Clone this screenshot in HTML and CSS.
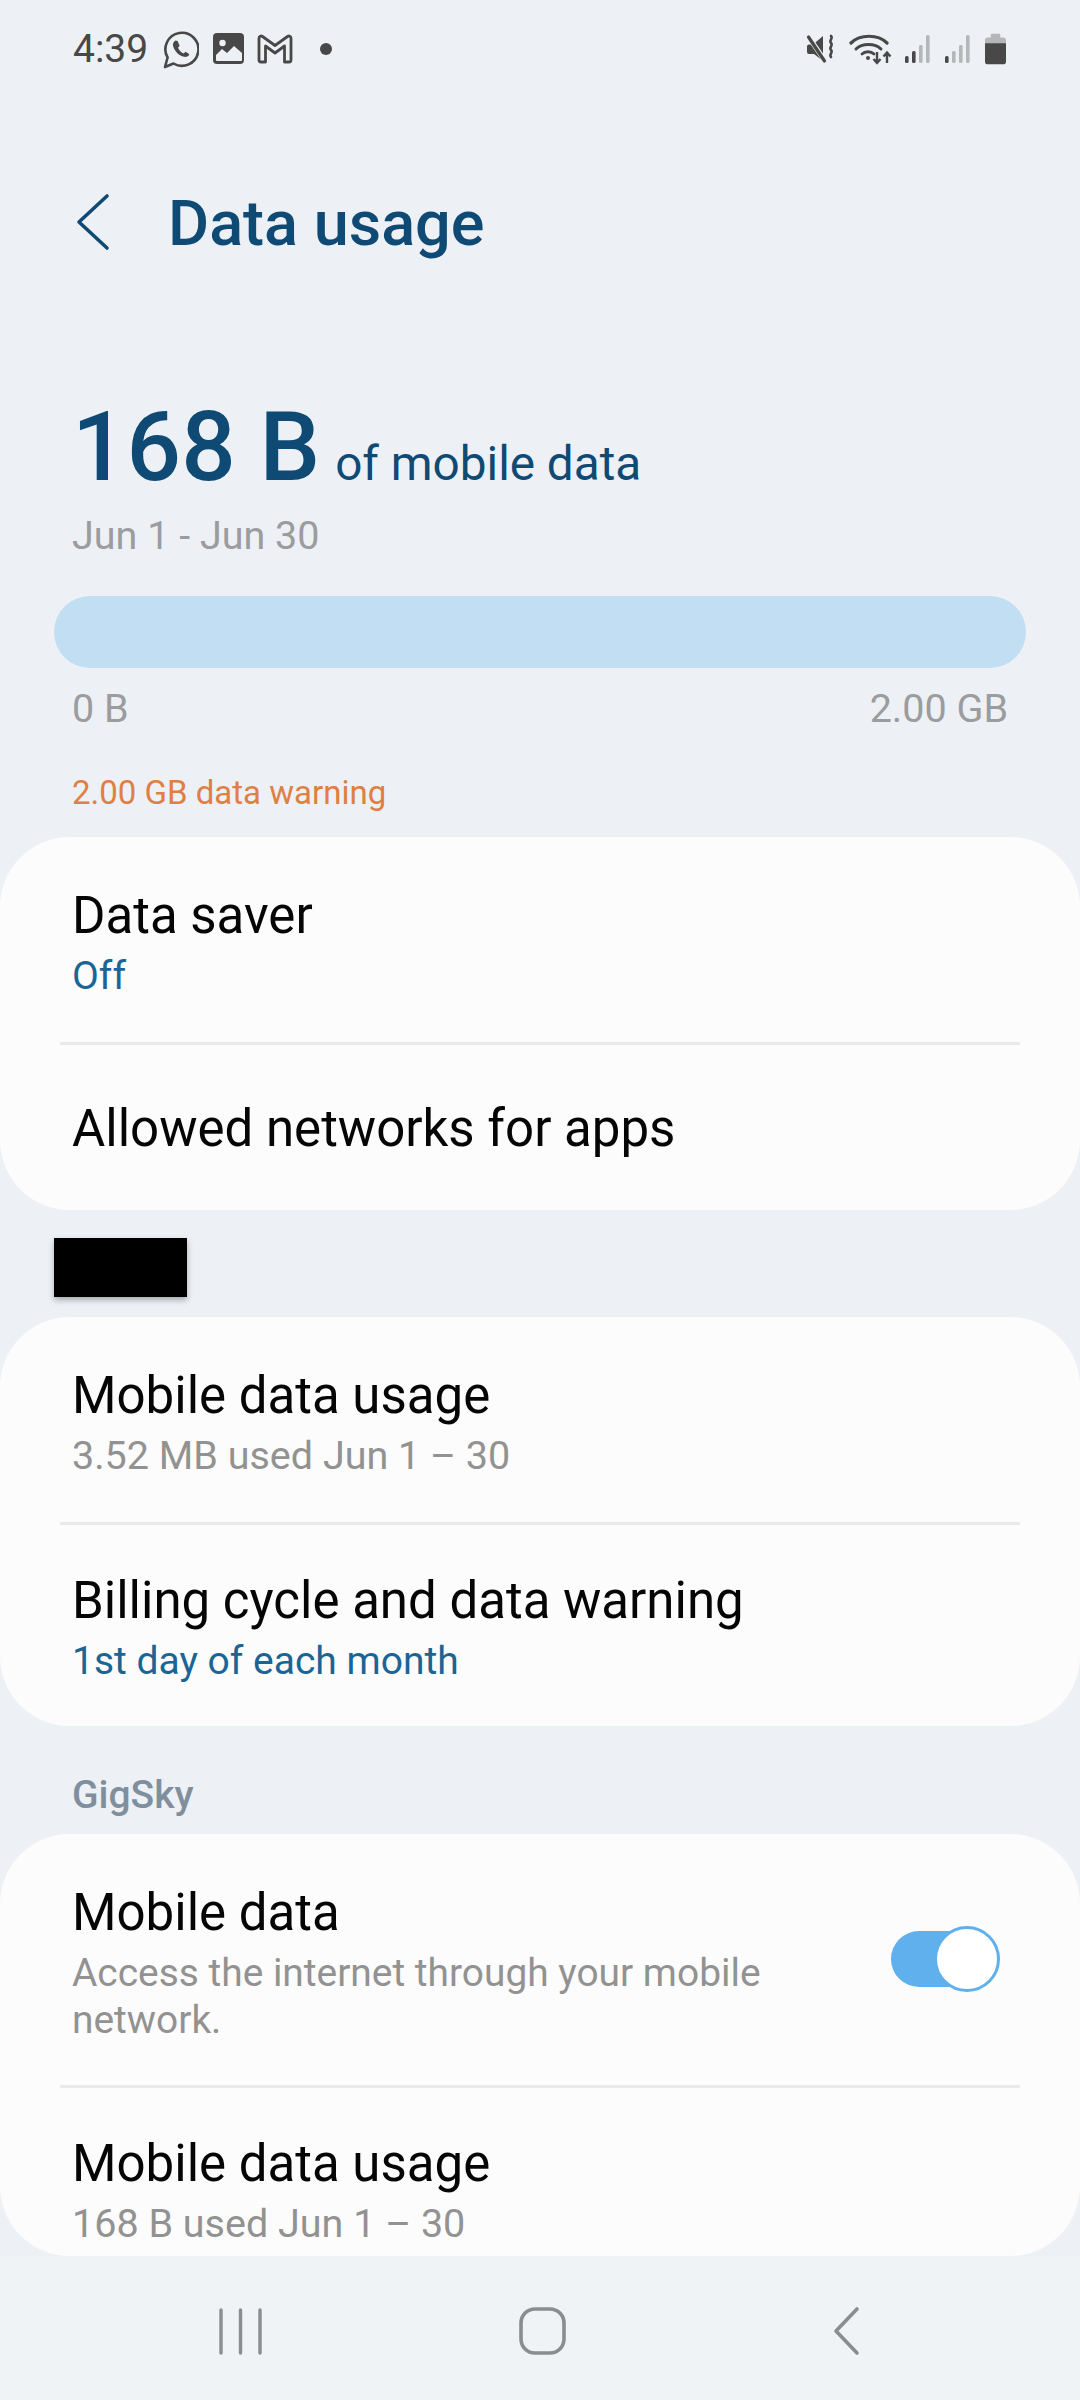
FILE: index.html
```html
<!DOCTYPE html>
<html lang="en">
<head>
<meta charset="utf-8">
<title>Data usage</title>
<link rel="stylesheet" href="styles.css">
</head>
<body>
<div class="screen">
  <div class="status">
    <div class="status-left">
      <span class="time">4:39</span>
      <svg class="ic-wa" viewBox="0 0 36 38" width="36" height="38"><path d="M2 36l2.600-9.500A16.500 16.500 0 1 1 10.500 32.500z" fill="none" stroke="#484848" stroke-width="2.600" stroke-linejoin="round"/><path d="M12.500 9.500c-1.800 1-3 3-2.400 5.500 1.300 5 5.500 9.500 11 10.800 2.400.5 4.500-.6 5.300-2.600l-3.800-2.500-2 1.700c-2.500-1-4.500-3-5.600-5.600l1.600-2.100-2-4.800z" fill="#484848"/></svg>
      <svg class="ic-img" viewBox="0 0 32 32" width="32" height="32"><rect width="31" height="31" rx="4" fill="#484848"/><circle cx="9.500" cy="10" r="3.200" fill="#edf1f5"/><path d="M3 27v-5l6-6 5 4 7-7 8 7v7a1 1 0 0 1-1 1H4a1 1 0 0 1-1-1z" fill="#edf1f5"/></svg>
      <svg class="ic-gm" viewBox="0 0 36 30" width="36" height="30"><path d="M2 4.500c0-2.500 2-3 3.500-2L18 11.500l12.500-9c1.500-1 3.500-.5 3.500 2V26a2 2 0 0 1-2 2h-4.500V12L18 19 8.500 12v16H4a2 2 0 0 1-2-2z" fill="none" stroke="#484848" stroke-width="2.800" stroke-linejoin="round"/></svg>
      <span class="dot"></span>
    </div>
    <div class="status-right">
      <svg viewBox="0 0 30 30" width="30" height="30"><path d="M1 12.500a2 2 0 0 1 2-2h4L17 2v25l-9-7H3a2 2 0 0 1-2-2z" fill="#484848"/><path d="M2 2l17 25" stroke="#edf1f5" stroke-width="5"/><path d="M2.500 3l16 24" stroke="#484848" stroke-width="3.200" stroke-linecap="round"/><path d="M25 2c2.500 2.500-2.500 4.500 0 7 2.500 2.500-2.500 4.500 0 7s-2.500 4.500 0 7" fill="none" stroke="#484848" stroke-width="2.600" stroke-linecap="round"/></svg>
      <svg viewBox="0 0 43 34" width="43" height="34"><path d="M2 11c9-9 27-9 36 0" fill="none" stroke="#484848" stroke-width="3.200" stroke-linecap="round"/><path d="M7 17c6-6 19-6 25 0" fill="none" stroke="#484848" stroke-width="3" stroke-linecap="round"/><path d="M13 22c3-3 9-3 12 0" fill="none" stroke="#484848" stroke-width="2.800" stroke-linecap="round"/><circle cx="19" cy="26" r="2" fill="#484848"/><path d="M28 20v11M24.500 27l3.500 4 3.500-4M38 31V21M34.500 24.500L38 20.500l3.500 4" fill="none" stroke="#484848" stroke-width="2.400"/></svg>
      <svg class="sig" viewBox="0 0 27 30" width="27" height="30"><rect x="0" y="22" width="3.600" height="7" rx="1.500" fill="#484848"/><rect x="7" y="17" width="3.600" height="12" rx="1.500" fill="#484848"/><rect x="14" y="11" width="3.600" height="18" rx="1.500" fill="#b4b6b8"/><rect x="21" y="1" width="3.600" height="28" rx="1.500" fill="#b4b6b8"/></svg>
      <svg class="sig" viewBox="0 0 27 30" width="27" height="30"><rect x="0" y="22" width="3.600" height="7" rx="1.500" fill="#484848"/><rect x="7" y="17" width="3.600" height="12" rx="1.500" fill="#b4b6b8"/><rect x="14" y="11" width="3.600" height="18" rx="1.500" fill="#b4b6b8"/><rect x="21" y="1" width="3.600" height="28" rx="1.500" fill="#b4b6b8"/></svg>
      <svg viewBox="0 0 22 32" width="21" height="32"><path d="M7 0h8a1 1 0 0 1 1 1v3h3a3 3 0 0 1 3 3v4H0V7a3 3 0 0 1 3-3h3V1a1 1 0 0 1 1-1z" fill="#b4b6b8"/><path d="M0 10h22v19a3 3 0 0 1-3 3H3a3 3 0 0 1-3-3z" fill="#484848"/></svg>
    </div>
  </div>

  <div class="appbar">
    <svg class="back" viewBox="0 0 34 58" width="34" height="58"><path d="M31 3L3 29l28 26" fill="none" stroke="#0f4a75" stroke-width="3.600" stroke-linecap="round" stroke-linejoin="round"/></svg>
    <h1 class="title">Data usage</h1>
  </div>

  <div class="summary">
    <div class="amount"><span class="big">168 B</span><span class="of">of mobile data</span></div>
    <div class="range">Jun 1 - Jun 30</div>
    <div class="bar"></div>
    <div class="bar-labels"><span>0 B</span><span>2.00 GB</span></div>
    <div class="warning">2.00 GB data warning</div>
  </div>

  <section class="card card-one">
    <div class="row row-two"><div class="name">Data saver</div><div class="sub blue">Off</div></div>
    <div class="rule"></div>
    <div class="row row-one"><div class="name">Allowed networks for apps</div></div>
  </section>

  <div class="redact-wrap"><div class="redact"></div></div>

  <section class="card card-two">
    <div class="row row-two"><div class="name">Mobile data usage</div><div class="sub">3.52 MB used Jun 1 – 30</div></div>
    <div class="rule"></div>
    <div class="row row-billing"><div class="name">Billing cycle and data warning</div><div class="sub blue">1st day of each month</div></div>
  </section>

  <div class="group-label">GigSky</div>

  <section class="card card-three">
    <div class="row row-toggle">
      <div class="row-text"><div class="name">Mobile data</div><div class="sub wrap">Access the internet through your mobile network.</div></div>
      <div class="toggle"><span class="knob"></span></div>
    </div>
    <div class="rule"></div>
    <div class="row row-last"><div class="name">Mobile data usage</div><div class="sub">168 B used Jun 1 – 30</div></div>
  </section>

  <nav class="nav">
    <svg viewBox="0 0 43 47" width="43" height="47"><path d="M2 2v43M21.500 2v43M41 2v43" stroke="#8b8c8d" stroke-width="3.400" stroke-linecap="round"/></svg>
    <svg class="nav-home" viewBox="0 0 47 48" width="47" height="48"><rect x="2" y="2" width="43" height="44" rx="14" fill="none" stroke="#8b8c8d" stroke-width="3.600"/></svg>
    <svg class="nav-back" viewBox="0 0 28 50" width="28" height="50"><path d="M25 3L4 25l21 22" fill="none" stroke="#8b8c8d" stroke-width="3.600" stroke-linecap="round" stroke-linejoin="round"/></svg>
  </nav>
</div>
</body>
</html>
```
FILE: styles.css
```css
* { box-sizing: border-box; }
html, body { margin: 0; padding: 0; }
body { width: 1080px; height: 2400px; background: #edf1f5; font-family: Roboto, "Liberation Sans", sans-serif; overflow: hidden; }
.screen { width: 1080px; height: 2400px; display: flex; flex-direction: column; }

.status { height: 96px; flex: none; padding: 26px 74px 0 73px; display: flex; justify-content: space-between; align-items: flex-start; }
.status-left { display: flex; align-items: center; height: 46px; }
.time { font-size: 39px; color: #484848; width: 90px; }
.ic-wa { margin-top: 2px; }
.ic-img { margin-left: 14px; }
.ic-gm { margin-left: 12px; }
.dot { width: 12px; height: 12px; border-radius: 50%; background: #484848; margin-left: 27px; }
.status-right { display: flex; align-items: center; gap: 13px; height: 46px; }

.appbar { height: 255px; flex: none; padding-left: 76px; display: flex; align-items: center; }
.back { flex: none; margin-bottom: 4px; }
.title { margin: 0 0 0 58px; font-size: 63px; line-height: 74px; font-weight: 500; color: #0f4a75; }

.summary { flex: none; margin-bottom: 23px; }
.amount { padding: 0 72px; margin-top: 48px; display: flex; align-items: baseline; height: 96px; }
.big { font-size: 96px; font-weight: 500; color: #0f4a75; line-height: 96px; }
.of { font-size: 47.7px; color: #0f4a75; margin-left: 15px; }
.range { padding: 0 72px; font-size: 39.5px; color: #9b9c9e; margin-top: 18px; line-height: 46px; }
.bar { margin: 37px 54px 0; height: 72px; border-radius: 36px; background: #c2def3; }
.bar-labels { margin-top: 18px; padding: 0 72px; display: flex; justify-content: space-between; font-size: 39.5px; color: #9b9c9e; line-height: 46px; }
.warning { margin-top: 40px; padding: 0 72px; font-size: 33px; color: #e07f43; line-height: 42px; }

.card { background: #fcfcfc; border-radius: 70px; flex: none; }
.card-one { height: 373px; }
.card-two { height: 409px; }
.card-three { height: 422px; overflow: hidden; }
.row { padding: 0 72px; }
.row-two { height: 205px; padding-top: 47px; }
.row-one { height: 165px; padding-top: 3px; display: flex; align-items: center; }
.row-billing { padding-top: 44px; }
.name { font-size: 51px; color: #050505; line-height: 64px; }
.sub { font-size: 39.5px; color: #929292; line-height: 46px; margin-top: 5px; }
.sub.blue { color: #1a6496; font-size: 39px; }
.sub.wrap { width: 760px; font-size: 38.9px; line-height: 47px; margin-top: 4px; }
.rule { height: 3px; margin: 0 60px; background: #e8e9ea; }

.redact-wrap { height: 107px; padding: 28px 0 0 54px; flex: none; }
.redact { width: 133px; height: 59px; background: #000; box-shadow: 0 3px 6px rgba(0,0,0,.3); }

.group-label { flex: none; height: 108px; padding: 46px 72px 0; font-size: 39px; font-weight: 500; color: #7f8f9e; line-height: 46px; }

.row-toggle { height: 251px; padding-top: 47px; display: flex; justify-content: space-between; }
.row-last { padding-top: 44px; }
.toggle { position: relative; flex: none; width: 106px; height: 56px; margin: 50px 11px 0 0; border-radius: 28px; background: #5fb0ec; }
.knob { position: absolute; right: -3px; top: -5px; width: 66px; height: 66px; border-radius: 50%; background: #fff; border: 3px solid #5fb0ec; }

.nav { flex: 1; background: #eff3f6; display: flex; align-items: center; padding: 6px 0 0 219px; }
.nav-home { margin-left: 257px; }
.nav-back { margin-left: 266px; }
```
